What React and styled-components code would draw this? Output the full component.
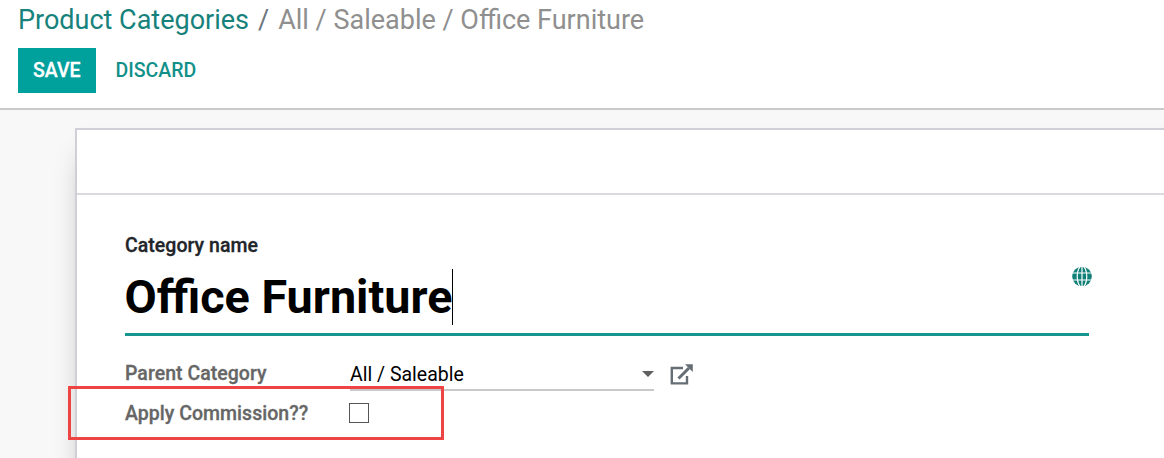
import React from "react";
import styled, { createGlobalStyle } from "styled-components";

const Global = createGlobalStyle`
  *, *::before, *::after { box-sizing: border-box; }
  body { margin: 0; background: #f8f8f8; overflow: hidden; }
`;

const Page = styled.div`
  height: 458px;
  overflow: hidden;
  display: flex;
  flex-direction: column;
  font: 400 19.5px/30px Roboto, sans-serif;
  color: #000;
`;

const ControlPanel = styled.header`
  flex: none;
  height: 110px;
  padding: 0 18px;
  background: #fff;
  border-bottom: 2px solid #c9c9cb;
`;

const Breadcrumb = styled.nav`
  display: flex;
  height: 40px;
  font-size: 27px;
  line-height: 40px;
  white-space: pre;
  color: #8f8f8f;
`;

const Crumb = styled.a`
  color: #17827b;
`;

const Separator = styled.span`
  padding: 0 9px;
  color: #6c757d;
`;

const Actions = styled.div`
  display: flex;
  padding-top: 8px;
`;

const Button = styled.button`
  height: 45px;
  padding: 0 ${(p) => (p.$primary ? 15 : 20)}px;
  border: 0;
  background: ${(p) => (p.$primary ? "#00a09d" : "transparent")};
  color: ${(p) => (p.$primary ? "#fff" : "#109089")};
  font: 500 19.5px/45px Roboto, sans-serif;
  -webkit-text-stroke: ${(p) => (p.$primary ? 0.3 : 0)}px;
`;

const Content = styled.main`
  flex: 1;
  display: flex;
  padding: 18px 0 0 75px;
`;

const Sheet = styled.section`
  flex: none;
  width: 1200px;
  height: 500px;
  background: #fff;
  border: 2px solid #cfcfd8;
  box-shadow: 0 16px 30px -14px rgba(0, 0, 0, 0.42);
`;

const StatusBar = styled.div`
  height: 65px;
  border-bottom: 2px solid #d9d9e0;
`;

const Form = styled.div`
  width: 1012px;
  padding: 36px 0 0 48px;
`;

const Label = styled.label`
  display: block;
  font-weight: 500;
  letter-spacing: 0.03px;
  -webkit-text-stroke: 0.3px;
  color: ${(p) => (p.$muted ? "#666" : "#212529")};
`;

const TitleField = styled.div`
  display: flex;
  align-items: flex-start;
  width: 964px;
  height: 75px;
  border-bottom: 3px solid #17968f;
`;

const Title = styled.h1`
  flex: 1;
  display: flex;
  align-items: center;
  height: 70px;
  padding-top: 1px;
  margin: 0 0 0 -0.5px;
  font-size: 46.75px;
  font-weight: 700;
  line-height: 56px;
`;

const Caret = styled.span`
  width: 1px;
  height: 56px;
  margin-left: -0.5px;
  background: #000;
`;

const TranslateButton = styled.span`
  display: flex;
  margin: 5px -3px 0 0;
`;

const Row = styled.div`
  position: relative;
  display: grid;
  grid-template-columns: 225px auto 1fr;
  height: 40px;
  margin-top: ${(p) => p.$gap || 0}px;
`;

const Select = styled.div`
  display: flex;
  align-items: center;
  justify-content: space-between;
  width: 304px;
  height: 32px;
  border-bottom: 2px solid #c9c9cb;
`;

const SelectValue = styled.span`
  padding-top: 2px;
`;

const ExternalLink = styled.span`
  display: flex;
  padding: 5px 0 0 16px;
`;

const Checkbox = styled.span`
  width: 20px;
  height: 20px;
  margin: 4px 0 0 -1px;
  border: 1px solid #555;
  background: #fff;
`;

const Highlight = styled.div`
  position: absolute;
  top: -13px;
  left: -57px;
  width: 376px;
  height: 54px;
  border: 3px solid #ef4444;
`;

const Globe = () => (
  <svg width="20" height="21" viewBox="0 0 20 21">
    <circle cx="10" cy="10.5" r="9.8" fill="#108078" />
    <g fill="none" stroke="#fff" strokeWidth="1.2">
      <path d="M0 7H20M0 14H20M10 0V21" />
      <ellipse cx="10" cy="10.5" rx="4.8" ry="10.5" />
    </g>
  </svg>
);

const ArrowDown = () => (
  <svg width="12" height="6" viewBox="0 0 12 6">
    <path d="M0 0H12L6 6Z" fill="#5f5f5f" />
  </svg>
);

const OpenRecord = () => (
  <svg width="24" height="22" viewBox="0 0 24 22">
    <g fill="none" stroke="#666e75">
      <path d="M13 4H1.8V19.4H17V12" strokeWidth="2.4" />
      <path d="M8.5 14.5L19 4" strokeWidth="3" />
    </g>
    <path d="M15 0.3H22.8V8Z" fill="#666e75" />
  </svg>
);

export default function App() {
  return (
    <Page>
      <Global />
      <ControlPanel>
        <Breadcrumb>
          <Crumb>Product Categories</Crumb>
          <Separator>/</Separator>
          <span>All / Saleable / Office Furniture</span>
        </Breadcrumb>
        <Actions>
          <Button $primary>SAVE</Button>
          <Button>DISCARD</Button>
        </Actions>
      </ControlPanel>
      <Content>
        <Sheet>
          <StatusBar />
          <Form>
            <Label>Category name</Label>
            <TitleField>
              <Title>
                Office Furniture
                <Caret />
              </Title>
              <TranslateButton>
                <Globe />
              </TranslateButton>
            </TitleField>
            <Row $gap={23}>
              <Label $muted>Parent Category</Label>
              <Select>
                <SelectValue>All / Saleable</SelectValue>
                <ArrowDown />
              </Select>
              <ExternalLink>
                <OpenRecord />
              </ExternalLink>
            </Row>
            <Row>
              <Label $muted>Apply Commission??</Label>
              <Checkbox />
              <Highlight />
            </Row>
          </Form>
        </Sheet>
      </Content>
    </Page>
  );
}
